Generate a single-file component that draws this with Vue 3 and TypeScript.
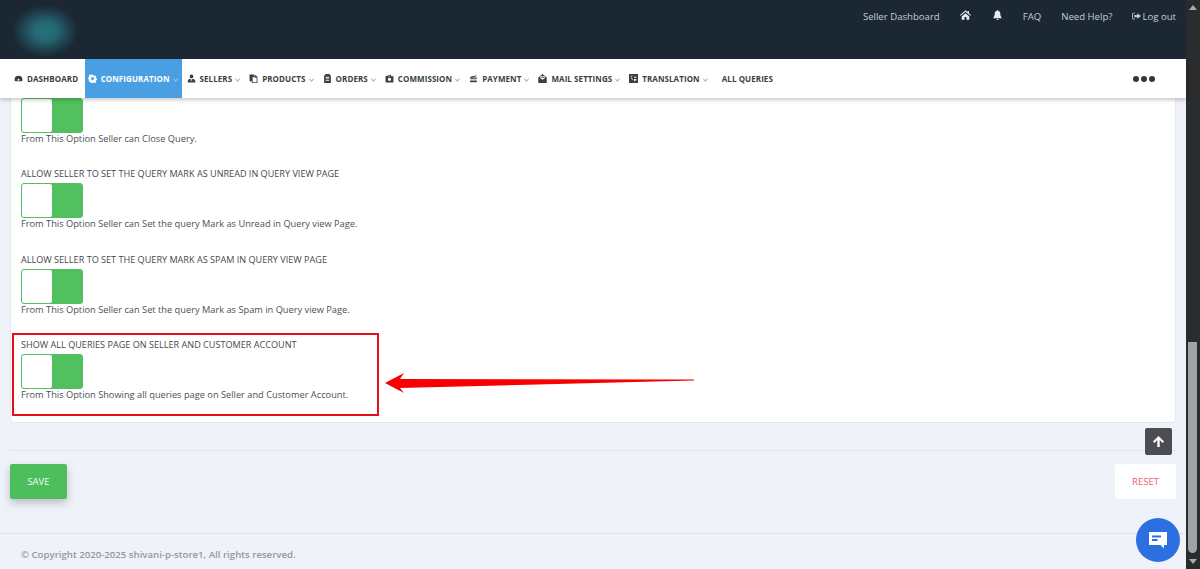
<script setup lang="ts">
interface NavItem { label: string; icon: string; caret: boolean; active?: boolean }
const icons: Record<string, string> = {
  dash: 'M8 3a7 7 0 0 0-7 7c0 1.300.4 2.500 1 3h12c.6-.5 1-1.700 1-3a7 7 0 0 0-7-7zm0 5.500a1.700 1.700 0 1 1 0 3.400 1.700 1.700 0 0 1 0-3.400z',
  gear: 'M6.700 1h2.600l.4 2 1.500.7 1.800-1.100 1.800 1.800-1.100 1.800.7 1.500 2 .4v2.600l-2 .4-.7 1.500 1.100 1.800-1.800 1.800-1.800-1.100-1.500.7-.4 2H6.700l-.4-2-1.500-.7L3 14.300 1.200 12.500l1.100-1.800-.7-1.500-2-.4V6.200l2-.4.7-1.500L1.200 2.500 3 .7 4.800 1.800l1.500-.7zM8 5.300a2.700 2.700 0 1 0 0 5.400 2.700 2.700 0 0 0 0-5.400z',
  users: 'M8 1a3.300 3.300 0 1 1 0 6.600A3.300 3.300 0 0 1 8 1zM1 15c0-4 2-6.500 5-6.500l2 3 2-3c3 0 5 2.500 5 6.500zM7 10h2v2H7z',
  copy: 'M1 1h8v3h5l1 1v11H5v-3H1zM10 1l4 2.500h-4z M6.500 5.500V14.500h7v-8h-4v-1z',
  list: 'M4 0h8v2h2v14H2V2h2zM5 5v1.500h6V5zm0 3v1.500h6V8zm0 3v1.500h6V11z',
  money: 'M1 4l9-3 1.500 3H15v11H1zM4 4h5.500L9 2.700zM8 6.500a3 3 0 1 0 0 6 3 3 0 0 0 0-6z',
  stack: 'M3 5l10-3v2L5.500 6H14v2.500H2V6zM2 10h12v1.500H2zM2 12.500h12V14.500H2z',
  mail: 'M8 0l7.500 6v10H.5V6zM4 4v3.500L8 10l4-2.500V4zM5.500 5.500h5v1h-5z',
  trans: 'M0 0h16v16H0zM3 3v1.500h3V3zM3 6l3 4.500 1-.8L4.500 6zM9 5v1.500h4V5zM9 9v4h1.500v-1.500H13V9z',
}
const navItems: NavItem[] = [
  { label: 'Dashboard', icon: 'dash', caret: false },
  { label: 'Configuration', icon: 'gear', caret: true, active: true },
  { label: 'Sellers', icon: 'users', caret: true },
  { label: 'Products', icon: 'copy', caret: true },
  { label: 'Orders', icon: 'list', caret: true },
  { label: 'Commission', icon: 'money', caret: true },
  { label: 'Payment', icon: 'stack', caret: true },
  { label: 'Mail Settings', icon: 'mail', caret: true },
  { label: 'Translation', icon: 'trans', caret: true },
]
const rows = [
  { label: '', desc: 'From This Option Seller can Close Query.' },
  { label: 'Allow Seller to Set the Query Mark as Unread in Query View Page', desc: 'From This Option Seller can Set the query Mark as Unread in Query view Page.' },
  { label: 'Allow Seller to Set the Query Mark as Spam in Query View Page', desc: 'From This Option Seller can Set the query Mark as Spam in Query view Page.' },
  { label: 'Show All Queries Page on Seller and Customer Account', desc: 'From This Option Showing all queries page on Seller and Customer Account.', marked: true },
]
</script>

<template>
  <div class="root">
    <div class="page">
      <header class="top">
        <div class="logo"></div>
        <nav class="toplinks">
          <span class="tl seller">Seller Dashboard</span>
          <svg class="ti home" viewBox="0 0 16 14"><path d="M8 0 0 7l1 1.200L8 2.300l7 5.900L16 7l-3-2.600V1h-2v1.700zM2.500 9v5h4V10h3v4h4V9L8 4.300z" /></svg>
          <svg class="ti bell" viewBox="0 0 14 16"><path d="M7 0c-.6 0-1 .4-1 1-2.500.5-3.500 2.500-3.500 5 0 3-1 4.500-2 6v1h13v-1c-1-1.500-2-3-2-6 0-2.500-1-4.500-3.500-5 0-.6-.4-1-1-1zM5.200 14.200a1.800 1.800 0 0 0 3.600 0z" /></svg>
          <span class="tl faq">FAQ</span>
          <span class="tl help">Need Help?</span>
          <span class="tl logout">
            <svg class="lo" viewBox="0 0 16 14"><path d="M5 1H3a3 3 0 0 0-3 3v6a3 3 0 0 0 3 3h2v-1.500H3A1.500 1.500 0 0 1 1.500 10V4A1.500 1.500 0 0 1 3 2.500h2zM9.500 2v3H4v4h5.500v3L16 7z" /></svg>Log out
          </span>
        </nav>
      </header>

      <nav class="menu">
        <div v-for="item in navItems" :key="item.label" class="mi" :class="{ active: item.active, first: item.icon === 'dash' }">
          <svg class="mic" viewBox="0 0 16 16"><path fill-rule="evenodd" :d="icons[item.icon]" /></svg>
          <span>{{ item.label }}</span>
          <svg v-if="item.caret" class="car" viewBox="0 0 6 4"><path d="M.5.800 3 3.200 5.500.800" /></svg>
        </div>
        <div class="mi plain">All Queries</div>
        <div class="dots"><i></i><i></i><i></i></div>
      </nav>

      <main class="main">
        <section class="card">
          <div v-for="row in rows" :key="row.desc" class="row">
            <div v-if="row.marked" class="mark"></div>
            <div v-if="row.label" class="lab">{{ row.label }}</div>
            <div class="toggle"><span class="thumb"></span></div>
            <div class="desc">{{ row.desc }}</div>
          </div>
        </section>

        <div class="rule"></div>
        <div class="actions">
          <button class="save">SAVE</button>
          <button class="reset">RESET</button>
        </div>
        <footer class="foot">© Copyright 2020-2025 shivani-p-store1, All rights reserved.</footer>

        <svg class="arrow" viewBox="0 0 320 24"><polygon points="1,11 20,1 16,7 310,7.500 310,8.500 16,16 20,21" /></svg>
        <button class="totop" aria-label="Back to top">
          <svg viewBox="0 0 14 14"><path d="M7 1 1 7l1.600 1.600L5.700 5.500V13h2.600V5.500l3.100 3.100L13 7z" /></svg>
        </button>
        <button class="chat" aria-label="Chat">
          <svg viewBox="0 0 20 20"><path d="M1 2h18v13h-3v3.500L12.500 15H1z" fill="#fff" /><rect x="4" y="5.500" width="9" height="2" fill="#2b6fe0" /><rect x="4" y="9" width="5.500" height="2" fill="#2b6fe0" /></svg>
        </button>
      </main>
    </div>

    <aside class="sb">
      <span class="up"></span>
      <div class="track"><div class="thumbbar"></div></div>
      <span class="down"></span>
    </aside>
  </div>
</template>

<style>
html, body { margin: 0; overflow: hidden; }
</style>

<style scoped>
.root { display: flex; width: 1200px; height: 569px; overflow: hidden; font-family: "Open Sans", "Noto Sans", sans-serif; }
.page { flex: 1; min-width: 0; display: flex; flex-direction: column; }

.top { height: 59px; background: #1b2833; display: flex; justify-content: flex-end; flex: none; position: relative; overflow: hidden; }
.logo { position: absolute; left: 9px; top: 3px; width: 72px; height: 56px; background: radial-gradient(ellipse 33px 26px at 50% 50%, #26727b 0%, #246872 35%, #1f4350 70%, #1b2833 100%); }
.toplinks { display: flex; align-items: center; height: 32px; padding-right: 10px; color: #c3cbd2; font-size: 9.600px; }
.tl { white-space: nowrap; }
.ti { fill: #e6ebef; display: block; }
.home { width: 11px; height: 10px; margin: -2px 0 0 20px; }
.bell { width: 9px; height: 10px; margin: -3px 0 0 22px; }
.faq { margin-left: 21px; }
.help { margin-left: 20px; }
.logout { margin-left: 20px; display: flex; align-items: center; }
.lo { width: 9px; height: 8px; fill: #c3cbd2; margin-right: 1px; }

.menu { height: 39px; flex: none; background: #fff; display: flex; align-items: stretch; padding-left: 9.5px; box-shadow: 0 2px 4px rgba(0,0,0,.22); position: relative; z-index: 2; }
.mi { display: flex; align-items: center; padding: 0 4.5px; font-size: 8px; font-weight: 700; color: #3b3f44; text-transform: uppercase; white-space: nowrap; letter-spacing: .08px; }
.mi.first { margin-right: 2px; }
.mi.active { background: #4a9fe3; color: #fff; padding: 0 4.5px 0 3px; }
.mi.plain { margin-left: 5px; }
.mic { width: 9px; height: 9px; fill: #3b3f44; margin-right: 4px; flex: none; }
.active .mic { fill: #fff; }
.car { width: 5px; height: 4px; fill: none; stroke: currentColor; stroke-width: .8; margin: 2px 0 0 3px; }
.dots { display: flex; gap: 2px; align-items: center; margin-left: auto; margin-right: 31px; }
.dots i { width: 6px; height: 6px; border-radius: 50%; background: #33373b; display: block; }

.main { flex: 1; min-height: 0; background: #eff2f9; position: relative; }
.card { margin: -0.5px 10px 0; background: #fff; border: 1px solid #e5e8ef; border-top: 0; border-radius: 0 0 4px 4px; padding: 0 10px 20.500px; }
.row { position: relative; margin-bottom: 21.500px; }
.row:last-child { margin-bottom: 0; }
.lab { font-size: 9.100px; line-height: 16px; font-weight: 500; color: #44484d; text-transform: uppercase; margin-bottom: 1px; white-space: nowrap; }
.toggle { width: 62px; height: 35px; box-sizing: border-box; background: #52c05f; border: 1px solid #52c05f; border-radius: 3px; }
.thumb { display: block; width: 30px; height: 33px; background: #fff; border-radius: 2px; }
.desc { font-size: 9.250px; line-height: 12px; color: #4c5055; white-space: nowrap; }
.mark { position: absolute; left: -9px; top: -4px; bottom: -15px; width: 367px; box-sizing: border-box; border: 2px solid #e3101a; }

.rule { height: 1px; margin: 27px 10px 0; background: #e2e5ec; }
.actions { display: flex; justify-content: space-between; margin: 13px 10px 0; }
.actions button { height: 35px; border: 0; border-radius: 2px; font: 400 9.500px "Open Sans", sans-serif; padding: 0; }
.save { width: 57px; background: #4cbf5c; color: #eefbf0; box-shadow: 0 4px 8px rgba(0,0,0,.22); }
.reset { width: 61px; background: #fff; color: #e8646a; }
.foot { margin-top: 34px; border-top: 1px solid #dfe2e9; padding: 14px 21px 0; font-size: 9.650px; line-height: 14px; font-weight: 600; color: #9298a3; }

.arrow { position: absolute; left: 384px; top: 274px; width: 320px; height: 24px; fill: #f80000; }
.totop { position: absolute; left: 1145px; top: 330px; width: 27px; height: 27px; border: 0; padding: 0; border-radius: 2px; background: #4b4d50; display: flex; align-items: center; justify-content: center; }
.totop svg { width: 13px; height: 13px; fill: #fff; }
.chat { position: absolute; left: 1136px; top: 420px; width: 44px; height: 44px; border: 0; padding: 0; border-radius: 50%; background: #2b6fe0; display: flex; align-items: center; justify-content: center; }
.chat svg { width: 20px; height: 20px; }

.sb { width: 14px; flex: none; background: #2a2b2d; display: flex; flex-direction: column; align-items: center; }
.up { margin-top: 5px; border: 4px solid transparent; border-top: 0; border-bottom: 5px solid #a9abae; }
.track { flex: 1; width: 100%; position: relative; }
.thumbbar { position: absolute; left: 2px; width: 9px; top: 332px; height: 211px; background: #a1a2a5; border-radius: 0 0 5px 5px; }
.down { margin-bottom: 5px; border: 4px solid transparent; border-bottom: 0; border-top: 5px solid #a9abae; }
</style>
